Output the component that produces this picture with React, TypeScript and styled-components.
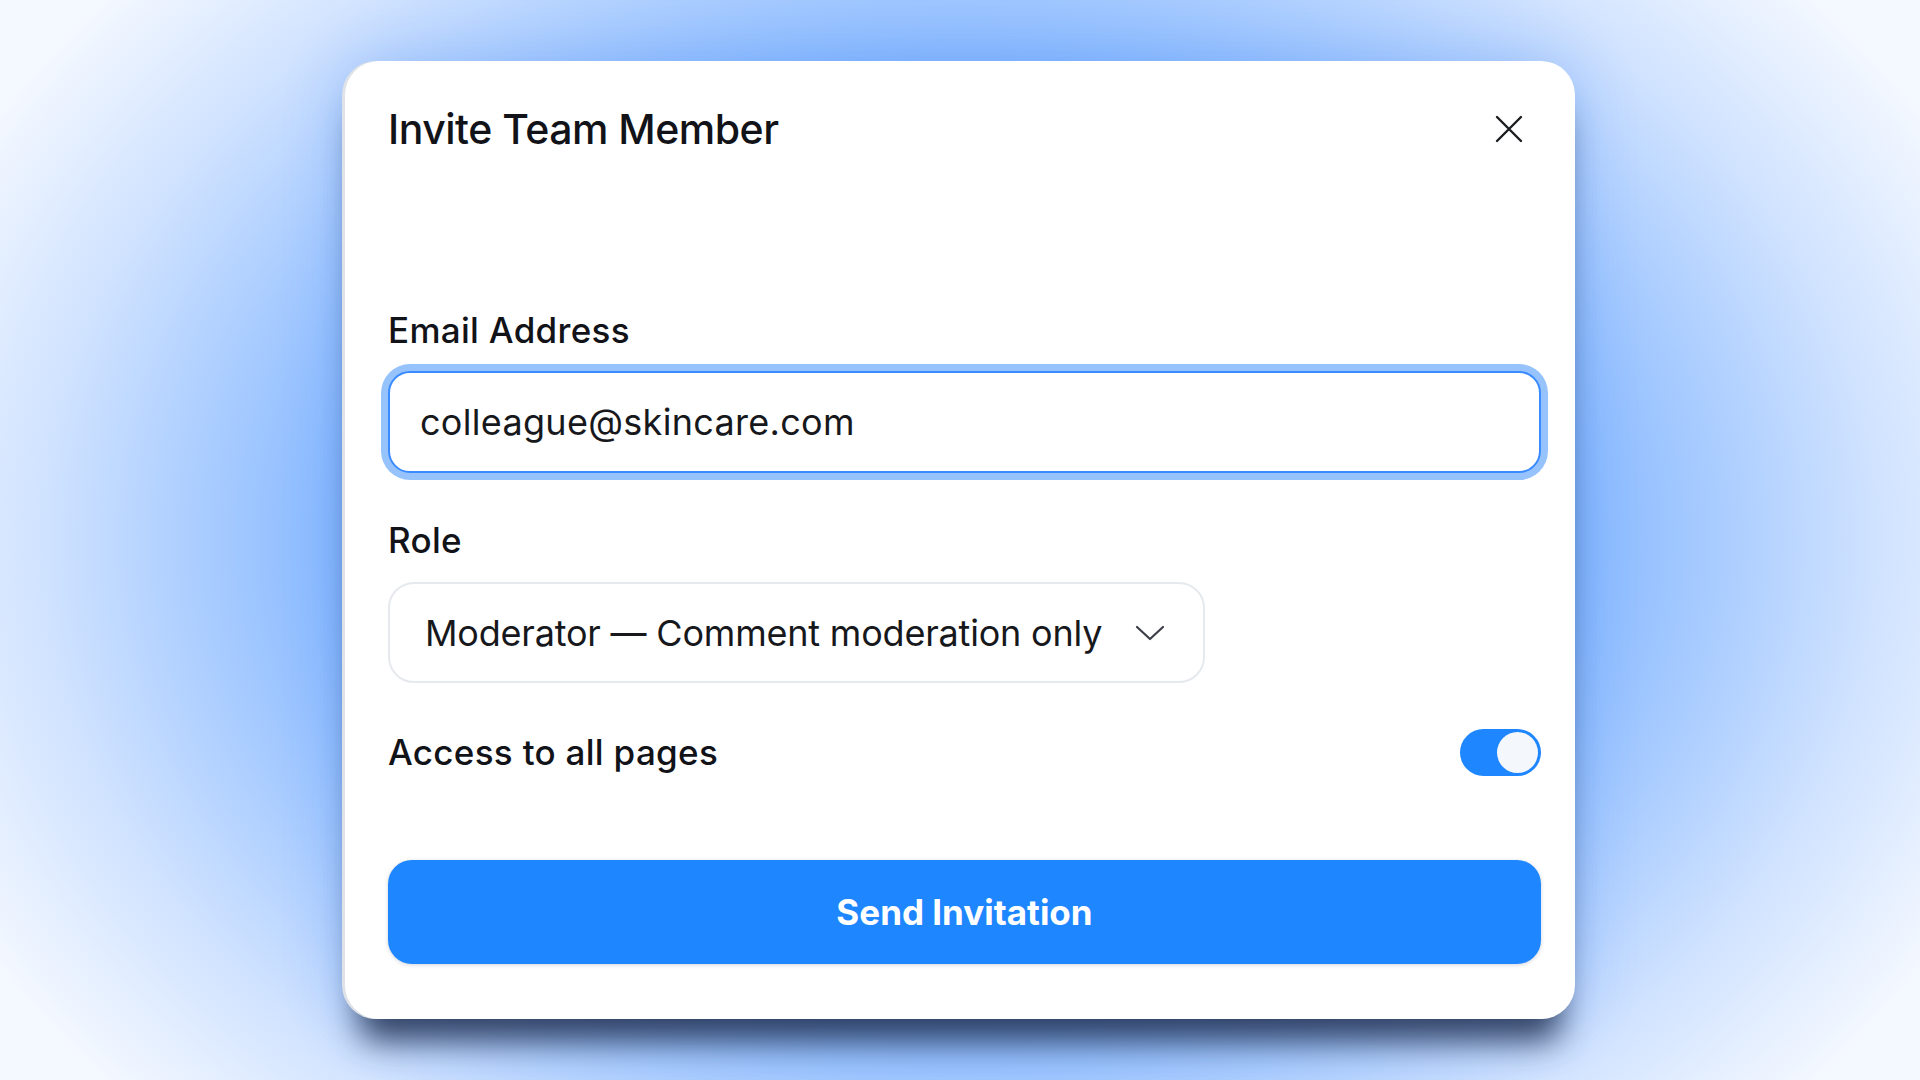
import React, { useState } from "react";
import styled, { createGlobalStyle } from "styled-components";

const GlobalStyle = createGlobalStyle`
  html, body {
    margin: 0;
    padding: 0;
  }
  body {
    font-family: Inter, "Open Sans", sans-serif;
    color: #121318;
  }
`;

const Page = styled.div`
  width: 1920px;
  height: 1080px;
  display: flex;
  align-items: center;
  justify-content: center;
  overflow: hidden;
  background: radial-gradient(
    ellipse 58% 78% at 50% 50%,
    #5f9cff 0%,
    #86b8ff 55%,
    #cfe2ff 82%,
    #f4f8ff 100%
  );
`;

const Modal = styled.div`
  width: 1230px;
  height: 958px;
  box-sizing: border-box;
  background: #ffffff;
  border-radius: 34px;
  padding: 42px 34px 53px 43px;
  display: flex;
  flex-direction: column;
  box-shadow: -3px 0 0 #dfe2e7, 0 36px 32px -14px rgba(38, 52, 84, 0.9),
    0 0 60px rgba(40, 110, 230, 0.25);
`;

const Header = styled.div`
  height: 52px;
  display: flex;
  align-items: center;
  justify-content: space-between;
`;

const Title = styled.h1`
  margin: 0;
  font-size: 41px;
  font-weight: 500;
  letter-spacing: -0.5px;
`;

const CloseButton = styled.button`
  width: 40px;
  height: 40px;
  margin-right: 12px;
  border: none;
  background: none;
  padding: 0;
  display: flex;
  align-items: center;
  justify-content: center;
  cursor: pointer;
  color: #1b1c20;
`;

const Label = styled.label<{ $top: number }>`
  display: block;
  margin-top: ${(p) => p.$top}px;
  height: 40px;
  line-height: 40px;
  font-size: 35px;
  font-weight: 500;
  letter-spacing: 0.3px;
`;

const EmailInput = styled.input`
  margin-top: 21px;
  height: 102px;
  box-sizing: border-box;
  width: 100%;
  border: 2px solid #3a8bff;
  border-radius: 22px;
  box-shadow: 0 0 0 7px #97c3fc;
  padding: 0 30px;
  font-family: Inter, "Open Sans", sans-serif;
  font-size: 36px;
  letter-spacing: 0.3px;
  color: #17181c;
  outline: none;
`;

const Select = styled.button`
  margin-top: 22px;
  height: 101px;
  width: 817px;
  box-sizing: border-box;
  display: flex;
  align-items: center;
  gap: 24px;
  padding: 0 38px 0 35px;
  background: #ffffff;
  border: 2px solid #e6e9ee;
  border-radius: 26px;
  font-family: Inter, "Open Sans", sans-serif;
  font-size: 36px;
  letter-spacing: -0.2px;
  color: #17181c;
  cursor: pointer;
`;

const SelectValue = styled.span`
  flex: 1;
  white-space: nowrap;
  text-align: left;
`;

const ToggleRow = styled.div`
  margin-top: 45px;
  height: 48px;
  display: flex;
  align-items: center;
  justify-content: space-between;
  font-size: 35px;
  font-weight: 500;
  letter-spacing: 0.3px;
`;

const Track = styled.button<{ $on: boolean }>`
  width: 81px;
  height: 47px;
  border: none;
  border-radius: 24px;
  padding: 3px;
  display: flex;
  justify-content: ${(p) => (p.$on ? "flex-end" : "flex-start")};
  background: ${(p) => (p.$on ? "#1e86ff" : "#cfd5de")};
  cursor: pointer;
`;

const Knob = styled.span`
  width: 41px;
  height: 41px;
  border-radius: 50%;
  background: #f4f7fc;
`;

const SendButton = styled.button`
  margin-top: 84px;
  height: 104px;
  width: 100%;
  border: none;
  border-radius: 24px;
  background: #1e86ff;
  color: #ffffff;
  font-family: Inter, "Open Sans", sans-serif;
  font-size: 35px;
  font-weight: 700;
  letter-spacing: 0;
  box-shadow: 0 1px 4px rgba(20, 40, 80, 0.2);
  cursor: pointer;
`;

export default function App() {
  const [email, setEmail] = useState("colleague@skincare.com");
  const [allPages, setAllPages] = useState(true);

  return (
    <Page>
      <GlobalStyle />
      <Modal>
        <Header>
          <Title>Invite Team Member</Title>
          <CloseButton aria-label="Close">
            <svg width="28" height="28" viewBox="0 0 28 28" fill="none">
              <path
                d="M2 2L26 26M26 2L2 26"
                stroke="currentColor"
                strokeWidth="2.4"
                strokeLinecap="round"
              />
            </svg>
          </CloseButton>
        </Header>

        <Label $top={155}>Email Address</Label>
        <EmailInput value={email} onChange={(e) => setEmail(e.target.value)} />

        <Label $top={47}>Role</Label>
        <Select>
          <SelectValue>Moderator — Comment moderation only</SelectValue>
          <svg width="30" height="16" viewBox="0 0 30 16" fill="none">
            <path
              d="M2 2L15 14L28 2"
              stroke="#3c3f46"
              strokeWidth="2.2"
              strokeLinecap="round"
              strokeLinejoin="round"
            />
          </svg>
        </Select>

        <ToggleRow>
          <span>Access to all pages</span>
          <Track $on={allPages} onClick={() => setAllPages(!allPages)}>
            <Knob />
          </Track>
        </ToggleRow>

        <SendButton>Send Invitation</SendButton>
      </Modal>
    </Page>
  );
}
